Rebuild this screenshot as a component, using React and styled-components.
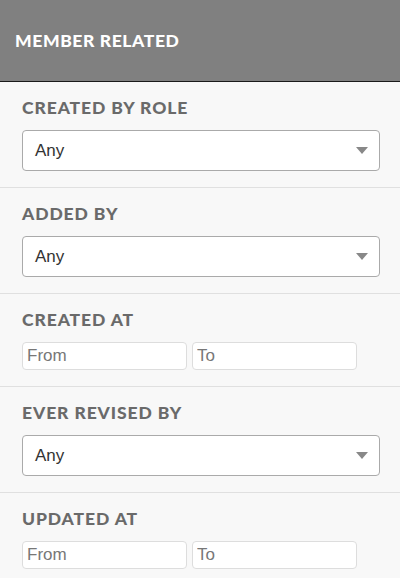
import React from "react";
import styled, { createGlobalStyle } from "styled-components";

const GlobalStyle = createGlobalStyle`
  html, body {
    margin: 0;
    padding: 0;
    background: #f8f8f8;
  }
  * {
    box-sizing: border-box;
  }
`;

const sections = [
  { label: "CREATED BY ROLE", kind: "select" },
  { label: "ADDED BY", kind: "select" },
  { label: "CREATED AT", kind: "range" },
  { label: "EVER REVISED BY", kind: "select" },
  { label: "UPDATED AT", kind: "range" },
];

const App = () => {
  return (
    <Panel>
      <GlobalStyle />
      <Header>
        <HeaderTitle>MEMBER RELATED</HeaderTitle>
      </Header>
      {sections.map((s) => (
        <Section key={s.label}>
          <Label>{s.label}</Label>
          {s.kind === "select" ? (
            <Select>
              <SelectValue>Any</SelectValue>
              <svg width="12" height="7" viewBox="0 0 12 7">
                <path d="M0 0 L12 0 L6 7 Z" fill="#888" />
              </svg>
            </Select>
          ) : (
            <Range>
              <DateInput placeholder="From" />
              <DateInput placeholder="To" />
            </Range>
          )}
        </Section>
      ))}
    </Panel>
  );
};

const Panel = styled.div`
  width: 400px;
  min-height: 578px;
  background: #f8f8f8;
  overflow: hidden;
`;

const Header = styled.div`
  height: 82px;
  background: #808080;
  border-bottom: 1px solid #1a1a1a;
  display: flex;
  align-items: center;
  padding: 0 15px 1px;
`;

const HeaderTitle = styled.h2`
  margin: 0;
  font-family: Lato, "Open Sans", sans-serif;
  font-weight: 900;
  font-size: 17.5px;
  color: #fff;
  letter-spacing: 0.6px;
`;

const Section = styled.div`
  padding: 17px 20px 16px 22px;
  border-bottom: 1px solid #e0e0e0;
`;

const Label = styled.div`
  font-family: Lato, "Open Sans", sans-serif;
  font-weight: 900;
  font-size: 17.5px;
  line-height: 18px;
  color: #6a6a6a;
  letter-spacing: 0.9px;
  margin-bottom: 13px;
`;

const Select = styled.div`
  height: 41px;
  width: 358px;
  background: #fff;
  border: 1px solid #aaa;
  border-radius: 4px;
  display: flex;
  align-items: center;
  justify-content: space-between;
  padding: 0 11px 0 12px;
`;

const SelectValue = styled.span`
  font-family: "Liberation Sans", Arial, sans-serif;
  font-size: 17px;
  color: #333;
`;

const Range = styled.div`
  display: flex;
  gap: 5px;
`;

const DateInput = styled.input`
  width: 165px;
  height: 28px;
  border: 1px solid #ddd;
  border-radius: 4px;
  background: #fff;
  padding: 0 4px;
  font-family: "Liberation Sans", Arial, sans-serif;
  font-size: 17px;
  color: #333;
  outline: none;
  &::placeholder {
    color: #777;
  }
`;

export default App;
